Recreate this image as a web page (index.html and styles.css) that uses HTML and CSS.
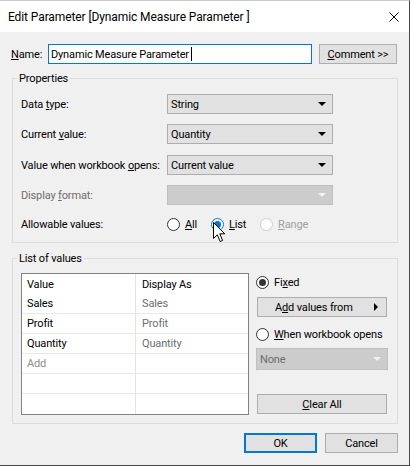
FILE: index.html
```html
<!DOCTYPE html>
<html lang="en">
<head>
<meta charset="utf-8">
<title>Edit Parameter</title>
<link rel="stylesheet" href="styles.css">
</head>
<body>
<div class="window">
  <div class="titlebar">
    <span class="title">Edit Parameter [Dynamic Measure Parameter ]</span>
    <svg class="close" width="10" height="10" viewBox="0 0 10 10"><path d="M0.5 0.5 L9.5 9.5 M9.5 0.5 L0.5 9.5" stroke="#000" stroke-width="1" fill="none"/></svg>
  </div>
  <div class="client">
    <div class="name-row">
      <span class="name-label"><u>N</u>ame:</span>
      <div class="textbox">Dynamic Measure Parameter <span class="caret"></span></div>
      <div class="btn comment"><u>C</u>omment &gt;&gt;</div>
    </div>

    <div class="group props">
      <span class="group-title">Properties</span>
      <div class="prop-row">
        <span class="prop-label">Data <u>t</u>ype:</span>
        <div class="combo"><span>String</span><i class="arrow"></i></div>
      </div>
      <div class="prop-row r2">
        <span class="prop-label">Current <u>v</u>alue:</span>
        <div class="combo"><span>Quantity</span><i class="arrow"></i></div>
      </div>
      <div class="prop-row r3">
        <span class="prop-label">Value when workbook <u>o</u>pens:</span>
        <div class="combo"><span>Current value</span><i class="arrow"></i></div>
      </div>
      <div class="prop-row r4">
        <span class="prop-label disabled-text">Display <u>f</u>ormat:</span>
        <div class="combo disabled"><span></span><i class="arrow"></i></div>
      </div>
      <div class="prop-row r5">
        <span class="prop-label">Allowable values:</span>
        <div class="radios">
          <div class="radio r-all"><span class="circle"></span><span><u>A</u>ll</span></div>
          <div class="radio r-list"><span class="circle checked blue"></span><span><u>L</u>ist</span></div>
          <div class="radio r-range disabled"><span class="circle"></span><span><u>R</u>ange</span></div>
        </div>
      </div>
    </div>

    <div class="group list">
      <span class="group-title">List of values</span>
      <div class="list-body">
        <div class="grid">
          <div class="row head"><div class="cell c1">Value</div><div class="cell c2">Display As</div></div>
          <div class="row line"><div class="cell c1">Sales</div><div class="cell c2 muted">Sales</div></div>
          <div class="row line"><div class="cell c1">Profit</div><div class="cell c2 muted">Profit</div></div>
          <div class="row line"><div class="cell c1">Quantity</div><div class="cell c2 muted">Quantity</div></div>
          <div class="row line"><div class="cell c1 add">Add</div><div class="cell c2"></div></div>
          <div class="row line"><div class="cell c1"></div><div class="cell c2"></div></div>
          <div class="row"><div class="cell c1"></div><div class="cell c2"></div></div>
        </div>
        <div class="side">
          <div class="radio side-radio fixed"><span class="circle checked"></span><span>Fi<u>x</u>ed</span></div>
          <div class="btn wide add-values"><span class="btn-text">A<u>d</u>d values from</span><i class="rarrow"></i></div>
          <div class="radio side-radio when"><span class="circle"></span><span><u>W</u>hen workbook opens</span></div>
          <div class="combo disabled none-combo"><span class="disabled-text">None</span><i class="arrow"></i></div>
          <div class="btn wide clear"><u>C</u>lear All</div>
        </div>
      </div>
    </div>

    <div class="footer">
      <div class="btn ok">OK</div>
      <div class="btn cancel">Cancel</div>
    </div>
  </div>
  <svg class="cursor" width="13" height="21" viewBox="0 0 13 21"><path d="M0.5 0.5 L0.5 16.5 L4.3 12.8 L7.2 19.5 L9.6 18.5 L6.8 11.8 L11.8 11.8 Z" fill="#fff" stroke="#000" stroke-width="1" stroke-linejoin="miter"/></svg>
</div>
</body>
</html>
```

FILE: styles.css
```css
* { box-sizing: border-box; }

body {
  margin: 0;
  background: #ffffff;
  font-family: Roboto, "Noto Sans", sans-serif;
  font-size: 11px;
  letter-spacing: -0.15px;
  color: #000;
  white-space: nowrap;
}

u { text-decoration: underline; text-underline-offset: 1px; }

.window {
  position: relative;
  width: 410px;
  height: 466px;
  border-top: 1px solid #c9c9c9;
  border-right: 1px solid #4a4a4a;
  border-bottom: 1px solid #4a4a4a;
  display: flex;
  flex-direction: column;
}

.titlebar {
  height: 31px;
  flex: none;
  background: #fff;
  display: flex;
  align-items: center;
  padding-left: 8px;
  font-size: 12px;
  letter-spacing: -0.1px;
}

.close {
  margin-left: auto;
  margin-right: 10px;
}

.client {
  flex: 1;
  background: #f0f0f0;
  padding: 12px 11px 0 12px;
}

.name-row {
  display: flex;
  align-items: center;
  height: 20px;
  margin-left: -1px;
}

.name-label { width: 37px; }

.textbox {
  width: 264px;
  height: 20px;
  border: 1px solid #0078d7;
  background: #fff;
  padding-left: 2px;
  display: flex;
  align-items: center;
  white-space: pre;
}

.caret {
  display: inline-block;
  width: 1px;
  height: 14px;
  background: #000;
}

.btn {
  background: #e1e1e1;
  border: 1px solid #adadad;
  height: 20px;
  display: flex;
  align-items: center;
  justify-content: center;
}

.comment {
  margin-left: 7px;
  width: 78px;
}

.group {
  position: relative;
  border: 1px solid #dcdcdc;
}

.group-title {
  position: absolute;
  top: -7px;
  left: 4px;
  padding: 0 2px;
  line-height: 14px;
  background: #f0f0f0;
}

.props {
  margin-top: 14px;
  padding: 15px 8px 8px 8px;
}

.prop-row {
  display: flex;
  align-items: center;
  height: 20px;
}
.prop-row.r2 { margin-top: 10px; }
.prop-row.r3 { margin-top: 11px; }
.prop-row.r4 { margin-top: 10px; }
.prop-row.r5 { margin-top: 9px; }

.prop-label { width: 146px; flex: none; }

.disabled-text { color: #6d6d6d; }

.combo {
  width: 166px;
  height: 20px;
  background: #e1e1e1;
  border: 1px solid #adadad;
  display: flex;
  align-items: center;
  padding: 0 6px 0 3px;
}
.combo.disabled {
  background: #cccccc;
  border-color: #bfbfbf;
}

.arrow {
  margin-left: auto;
  width: 0;
  height: 0;
  border-left: 4px solid transparent;
  border-right: 4px solid transparent;
  border-top: 4px solid #000;
}
.combo.disabled .arrow { border-top-color: #f2f2f2; }

.radios { display: flex; align-items: center; }

.radio {
  display: flex;
  align-items: center;
  gap: 5px;
}
.r-all { width: 44px; }
.r-list { width: 49px; }
.radio.disabled { color: #a0a0a0; }
.radio.disabled .circle { border-color: #cccccc; }

.circle {
  width: 13px;
  height: 13px;
  flex: none;
  border: 1px solid #333;
  border-radius: 50%;
  background: #fff;
  display: flex;
  align-items: center;
  justify-content: center;
}
.circle.checked::after {
  content: "";
  width: 7px;
  height: 7px;
  border-radius: 50%;
  background: #333;
}
.circle.blue { border-color: #0078d7; }
.circle.blue::after { background: #0078d7; }

.list {
  margin-top: 15px;
  padding: 14px 8px 8px 8px;
}

.list-body {
  display: flex;
  gap: 7px;
}

.grid {
  width: 228px;
  height: 142px;
  border: 1px solid #828282;
  background: #fff;
}

.row {
  display: flex;
  height: 20px;
}
.row.line { border-bottom: 1px solid #e8e8e8; }

.cell {
  display: flex;
  align-items: center;
}
.c1 {
  width: 114px;
  padding-left: 5px;
  border-right: 1px solid #e3e3e3;
}
.c2 {
  flex: 1;
  padding-left: 6px;
}
.muted { color: #6d6d6d; }
.add { color: #8d8d8d; }

.side {
  width: 132px;
  display: flex;
  flex-direction: column;
}

.side-radio { height: 18px; }

.wide {
  width: 130px;
  margin-left: 1px;
}

.add-values {
  margin-top: 6px;
  justify-content: flex-start;
  padding-left: 17px;
  padding-right: 8px;
}
.btn-text { flex: 1; }
.rarrow {
  width: 0;
  height: 0;
  border-top: 4px solid transparent;
  border-bottom: 4px solid transparent;
  border-left: 4px solid #000;
}

.when { margin-top: 8px; }

.none-combo {
  margin-top: 5px;
  width: 132px;
  height: 22px;
}

.clear { margin-top: 24px; }

.footer {
  display: flex;
  justify-content: flex-end;
  gap: 8px;
  margin-top: 9px;
}
.footer .btn { width: 73px; }
.ok { border: 2px solid #0078d7; }

.cursor {
  position: absolute;
  left: 213px;
  top: 221px;
}
```
